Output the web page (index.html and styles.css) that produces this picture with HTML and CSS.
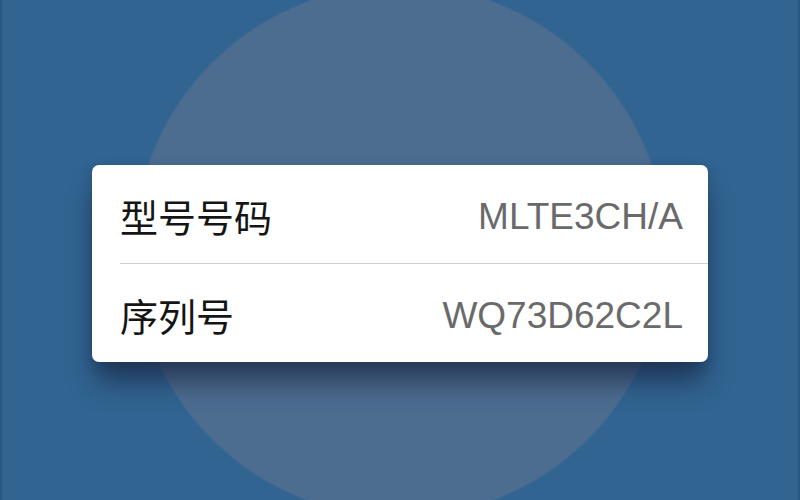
FILE: index.html
```html
<!DOCTYPE html>
<html lang="zh-CN">
<head>
<meta charset="utf-8">
<title>关于本机</title>
<link rel="stylesheet" href="styles.css">
</head>
<body>
<main class="screen">
  <section class="info-card">
    <div class="info-row">
      <span class="info-label">型号号码</span>
      <span class="info-value">MLTE3CH/A</span>
    </div>
    <div class="info-row">
      <span class="info-label">序列号</span>
      <span class="info-value">WQ73D62C2L</span>
    </div>
  </section>
</main>
</body>
</html>
```
FILE: styles.css
```css
html, body {
  margin: 0;
  padding: 0;
}

.screen {
  width: 800px;
  height: 500px;
  overflow: hidden;
  box-sizing: border-box;
  padding-top: 165px;
  display: flex;
  flex-direction: column;
  align-items: center;
  background: radial-gradient(circle 267px at 400px 251px, #4c6c90 265px, #316491 267px);
  box-shadow: inset 2px 0 0 #2a5682, inset -2px 0 0 #2a5682;
}

.info-card {
  width: 616px;
  background: #ffffff;
  border-radius: 7px;
  box-shadow: 0 24px 26px -4px rgba(22, 32, 58, 0.6), 0 4px 12px rgba(22, 32, 58, 0.25);
  display: flex;
  flex-direction: column;
}

.info-row {
  height: 98px;
  margin-left: 28px;
  padding-right: 25px;
  display: flex;
  align-items: center;
  justify-content: space-between;
}

.info-row:first-child {
  border-bottom: 1.5px solid #cfcfd2;
}

.info-label {
  font-family: "Noto Sans CJK SC", "Noto Sans", sans-serif;
  font-size: 38px;
  color: #151515;
  line-height: 1;
  margin-top: 4px;
}

.info-value {
  font-family: "Liberation Sans", Arial, sans-serif;
  font-size: 37px;
  color: #6a6a6a;
  line-height: 1;
  margin-top: 4px;
}
```
